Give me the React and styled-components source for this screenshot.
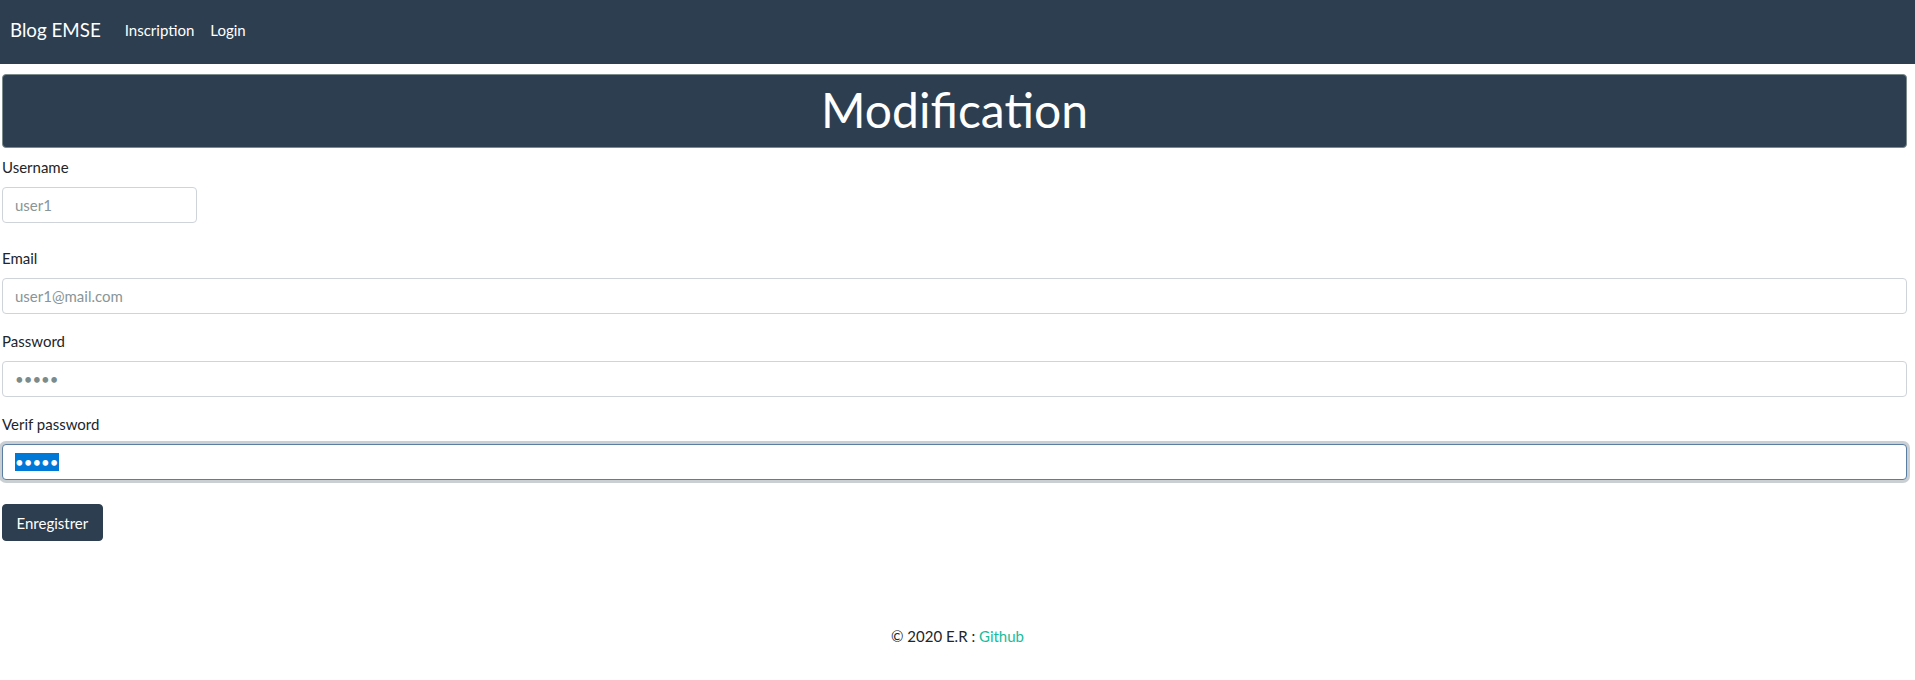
import React, { useEffect, useRef } from "react";
import styled, { createGlobalStyle, css } from "styled-components";

const GlobalStyle = createGlobalStyle`
  html, body {
    margin: 0;
    padding: 0;
    background: #ffffff;
  }
  body {
    font-family: Lato, "Open Sans", "Liberation Sans", sans-serif;
    font-size: 15px;
    line-height: 1.5;
    color: #212529;
  }
  * { box-sizing: border-box; }
`;

const Navbar = styled.nav`
  height: 64px;
  background: #2c3e50;
  display: flex;
  align-items: center;
  padding: 0 10px 4px;
`;

const Brand = styled.a`
  color: #ffffff;
  font-size: 18.75px;
  text-decoration: none;
  margin-right: 24px;
`;

const NavList = styled.div`
  display: flex;
  gap: 16px;
`;

const NavLink = styled.a`
  color: #ffffff;
  font-size: 15px;
  text-decoration: none;
`;

const Main = styled.main`
  padding: 10px 8px 0 2px;
`;

const PageTitle = styled.h1`
  margin: 0 0 8px;
  height: 74px;
  background: #2c3e50;
  border: 1px solid #7b8a8b;
  border-radius: 4px;
  color: #ffffff;
  font-size: 48px;
  font-weight: 400;
  line-height: 70px;
  text-align: center;
`;

const FormGroup = styled.div`
  margin-bottom: ${(p) => p.$gap || 16}px;
`;

const Label = styled.label`
  display: block;
  margin-bottom: 8px;
  line-height: 22.5px;
`;

const Input = styled.input`
  display: block;
  width: ${(p) => (p.$narrow ? "195px" : "100%")};
  height: 36.5px;
  padding: 6px 12px;
  font-family: Lato, "Open Sans", "Liberation Sans", sans-serif;
  font-size: 15px;
  color: #7b8a8b;
  background: #ffffff;
  border: 1px solid #ced4da;
  border-radius: 4px;
  outline: none;
  &::placeholder {
    color: #8a9597;
    opacity: 1;
  }
  &::selection {
    background: #0078d7;
    color: #ffffff;
  }
  ${(p) =>
    p.$focused &&
    css`
      color: #495057;
      border-color: #597ea2;
      box-shadow: 0 0 0 3px rgba(44, 62, 80, 0.25);
    `}
`;

const Button = styled.button`
  margin-top: 8px;
  height: 37px;
  padding: 6px 13.5px;
  font-family: Lato, "Open Sans", "Liberation Sans", sans-serif;
  font-size: 15px;
  color: #ffffff;
  background: #2c3e50;
  border: 1px solid #2c3e50;
  border-radius: 4px;
  cursor: pointer;
`;

const Footer = styled.footer`
  margin-top: 84px;
  text-align: center;
  line-height: 22.5px;
`;

const FooterLink = styled.a`
  color: #18bc9c;
  text-decoration: none;
`;

export default function App() {
  const verifRef = useRef(null);
  useEffect(() => {
    const el = verifRef.current;
    if (el) {
      el.focus();
      el.select();
    }
  }, []);

  return (
    <>
      <GlobalStyle />
      <Navbar>
        <Brand href="#">Blog EMSE</Brand>
        <NavList>
          <NavLink href="#">Inscription</NavLink>
          <NavLink href="#">Login</NavLink>
        </NavList>
      </Navbar>
      <Main>
        <PageTitle>Modification</PageTitle>
        <form onSubmit={(e) => e.preventDefault()}>
          <FormGroup $gap={24}>
            <Label htmlFor="username">Username</Label>
            <Input id="username" $narrow placeholder="user1" />
          </FormGroup>
          <FormGroup>
            <Label htmlFor="email">Email</Label>
            <Input id="email" type="email" placeholder="user1@mail.com" />
          </FormGroup>
          <FormGroup>
            <Label htmlFor="password">Password</Label>
            <Input id="password" type="password" defaultValue="abcde" />
          </FormGroup>
          <FormGroup>
            <Label htmlFor="verif">Verif password</Label>
            <Input
              id="verif"
              ref={verifRef}
              type="password"
              defaultValue="abcde"
              $focused
            />
          </FormGroup>
          <Button type="submit">Enregistrer</Button>
        </form>
      </Main>
      <Footer>
        © 2020 E.R : <FooterLink href="#">Github</FooterLink>
      </Footer>
    </>
  );
}
